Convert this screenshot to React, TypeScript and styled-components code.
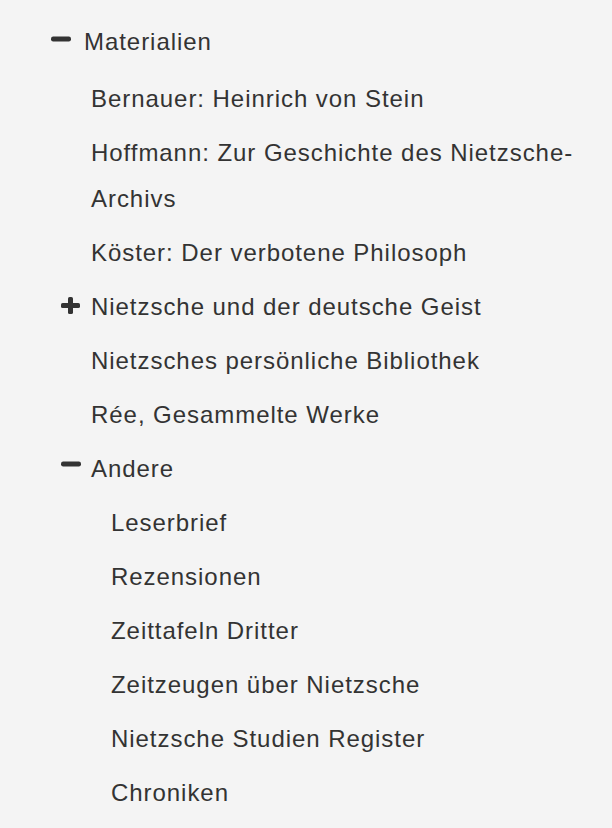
import styled, { createGlobalStyle } from "styled-components";

interface Node {
  label: string;
  open?: boolean;
  children?: Node[];
}

const tree: Node[] = [
  {
    label: "Materialien",
    open: true,
    children: [
      { label: "Bernauer: Heinrich von Stein" },
      { label: "Hoffmann: Zur Geschichte des Nietzsche-Archivs" },
      { label: "Köster: Der verbotene Philosoph" },
      { label: "Nietzsche und der deutsche Geist", open: false, children: [] },
      { label: "Nietzsches persönliche Bibliothek" },
      { label: "Rée, Gesammelte Werke" },
      {
        label: "Andere",
        open: true,
        children: [
          { label: "Leserbrief" },
          { label: "Rezensionen" },
          { label: "Zeittafeln Dritter" },
          { label: "Zeitzeugen über Nietzsche" },
          { label: "Nietzsche Studien Register" },
          { label: "Chroniken" },
        ],
      },
    ],
  },
];

// where the toggle sits for each depth, and how wide its slot is
const levels = [
  { indent: 51, toggle: 33, iconTop: 17 },
  { indent: 61, toggle: 30, iconTop: 15 },
  { indent: 82, toggle: 29, iconTop: 15 },
];

const Minus = () => (
  <svg width="20" height="6" viewBox="0 0 20 6">
    <rect x="0" y="0.5" width="20" height="5" rx="2.2" fill="#333" />
  </svg>
);

const Plus = () => (
  <svg width="19" height="17" viewBox="0 0 19 17" style={{ marginTop: -2 }}>
    <rect x="0" y="6" width="19" height="5" rx="1.6" fill="#333" />
    <rect x="7" y="0" width="5" height="17" rx="1.6" fill="#333" />
  </svg>
);

const Item = ({ node, depth }: { node: Node; depth: number }) => {
  const lv = levels[depth];
  const hasKids = node.children !== undefined;
  return (
    <Li>
      <Row $indent={lv.indent}>
        <Toggle $w={lv.toggle} $top={lv.iconTop}>
          {hasKids ? node.open ? <Minus /> : <Plus /> : null}
        </Toggle>
        <Label>{node.label}</Label>
      </Row>
      {hasKids && node.open && node.children!.length > 0 && (
        <List $first={depth === 0}>
          {node.children!.map((c) => (
            <Item key={c.label} node={c} depth={depth + 1} />
          ))}
        </List>
      )}
    </Li>
  );
};

const App = () => {
  return (
    <>
      <GlobalStyle />
      <Page>
        <List>
          {tree.map((n) => (
            <Item key={n.label} node={n} depth={0} />
          ))}
        </List>
      </Page>
    </>
  );
};

export default App;

const GlobalStyle = createGlobalStyle`
  html, body {
    margin: 0;
    padding: 0;
    background: #f4f4f4;
  }
`;

const Page = styled.div`
  width: 612px;
  min-height: 828px;
  box-sizing: border-box;
  padding: 15px 20px 0 0;
  font-family: "Liberation Sans", Arial, sans-serif;
  font-size: 24px;
  letter-spacing: 0.95px;
  color: #333;
`;

const List = styled.ul<{ $first?: boolean }>`
  list-style: none;
  margin: ${(p) => (p.$first ? "3px" : "0")} 0 0 0;
  padding: 0;
`;

const Li = styled.li`
  margin: 0;
  padding: 0;
`;

const Row = styled.div<{ $indent: number }>`
  display: flex;
  align-items: flex-start;
  padding: 4px 0 4px ${(p) => p.$indent}px;
  line-height: 46px;
`;

const Toggle = styled.span<{ $w: number; $top: number }>`
  flex: 0 0 ${(p) => p.$w}px;
  display: flex;
  align-items: flex-start;
  padding-top: ${(p) => p.$top}px;
  height: 46px;
  box-sizing: border-box;
  svg {
    display: block;
  }
`;

const Label = styled.span`
  flex: 1;
`;
